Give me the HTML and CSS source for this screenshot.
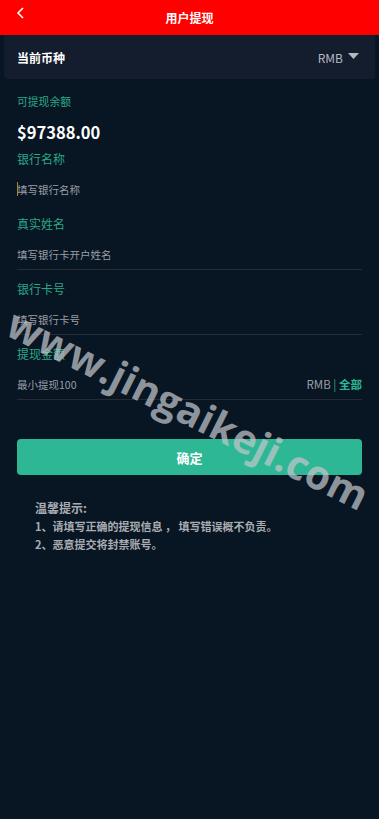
FILE: index.html
```html
<!DOCTYPE html>
<html lang="zh-CN">
<head>
<meta charset="utf-8">
<meta name="viewport" content="width=device-width, initial-scale=1">
<title>用户提现</title>
<link rel="stylesheet" href="styles.css">
</head>
<body>
<div class="page">
  <header class="topbar">
    <svg class="back" width="10" height="14" viewBox="0 0 10 14"><polyline points="7,2 2,7 7,12" fill="none" stroke="#fff" stroke-width="1.6"/></svg>
    <h1 class="title">用户提现</h1>
  </header>
  <div class="currency">
    <span class="currency-label">当前币种</span>
    <span class="currency-value">RMB <svg class="tri" width="11" height="6" viewBox="0 0 11 6"><polygon points="0,0 11,0 5.5,6" fill="#b4b8c1"/></svg></span>
  </div>
  <main class="content">
    <div class="balance-label">可提现余额</div>
    <div class="balance">$97388.00</div>
    <div class="field first">
      <div class="label">银行名称</div>
      <div class="input noline"><span class="caret"></span><span class="ph">填写银行名称</span></div>
    </div>
    <div class="field">
      <div class="label">真实姓名</div>
      <div class="input"><span class="ph">填写银行卡开户姓名</span></div>
    </div>
    <div class="field">
      <div class="label">银行卡号</div>
      <div class="input"><span class="ph">填写银行卡号</span></div>
    </div>
    <div class="field">
      <div class="label">提现金额</div>
      <div class="input split"><span class="ph">最小提现100</span><span class="unit">RMB <span class="bar">|</span> <span class="all">全部</span></span></div>
    </div>
    <button class="submit">确定</button>
    <div class="tips">
      <div class="tips-title">温馨提示:</div>
      <div>1、请填写正确的提现信息 ， 填写错误概不负责。</div>
      <div>2、恶意提交将封禁账号。</div>
    </div>
  </main>
  <div class="watermark">www.jingaikeji.com</div>
</div>
</body>
</html>
```
FILE: styles.css
```css
* { box-sizing: border-box; }
html, body { margin: 0; padding: 0; }
body {
  background: #081522;
  font-family: "Noto Sans CJK SC", "Noto Sans", sans-serif;
  color: #fff;
  width: 379px;
  min-height: 819px;
  overflow: hidden;
}
.page { position: relative; min-height: 819px; }
.topbar {
  height: 35px;
  background: #ff0000;
  display: flex;
  align-items: center;
  justify-content: center;
  position: relative;
}
.back { position: absolute; left: 16px; top: 6px; }
.title {
  margin: 0;
  font-size: 12px;
  font-weight: 700;
  line-height: 35px;
}
.currency {
  margin: 0 4px;
  height: 44px;
  background: #131d2e;
  border-radius: 0 0 4px 4px;
  display: flex;
  align-items: center;
  justify-content: space-between;
  padding: 0 16px 0 13px;
}
.currency-label { font-size: 12px; font-weight: 700; color: #fff; }
.currency-value { font-size: 12px; color: #b4b8c1; display: flex; align-items: center; gap: 5px; }
.tri { margin-top: -3px; }
.content { padding: 12px 17px 0; }
.balance-label { font-size: 10.8px; line-height: 20px; color: #2aa889; }
.balance { font-size: 16.5px; font-weight: 700; line-height: 24px; margin-top: 9px; }
.field { margin-top: 9px; }
.field.first { margin-top: 5px; }
.label { font-size: 12px; line-height: 20px; color: #2aa889; }
.input {
  margin-top: 5px;
  height: 31px;
  border-bottom: 1px solid #252b33;
  display: flex;
  align-items: center;
  font-size: 10.5px;
  position: relative;
}
.input.noline { border-bottom-color: transparent; }
.ph { color: #9a9ea6; }
.caret {
  position: absolute;
  left: 0;
  top: 8px;
  width: 1px;
  height: 14px;
  background: #a88a2a;
}
.split { justify-content: space-between; }
.unit { color: #9a9ea6; font-size: 11.5px; }
.bar { color: #2aa889; }
.all { color: #2db795; font-weight: 700; }
.submit {
  display: block;
  width: 100%;
  margin-top: 39px;
  height: 36px;
  border: 0;
  border-radius: 4px;
  background: #2db795;
  color: #fff;
  font-family: inherit;
  font-size: 13px;
  font-weight: 700;
}
.tips {
  margin: 24px 0 0 18px;
  font-size: 11px;
  line-height: 18px;
  color: #a9adb3;
  font-weight: 700;
}
.tips-title { font-size: 12px; }
.watermark {
  position: absolute;
  left: 20px;
  top: 301px;
  transform: rotate(26.5deg);
  transform-origin: left top;
  font-family: "Open Sans", "DejaVu Sans", sans-serif;
  font-weight: 700;
  font-size: 40.5px;
  line-height: 44px;
  color: rgba(195, 198, 204, 0.72);
  white-space: nowrap;
  pointer-events: none;
}
```
